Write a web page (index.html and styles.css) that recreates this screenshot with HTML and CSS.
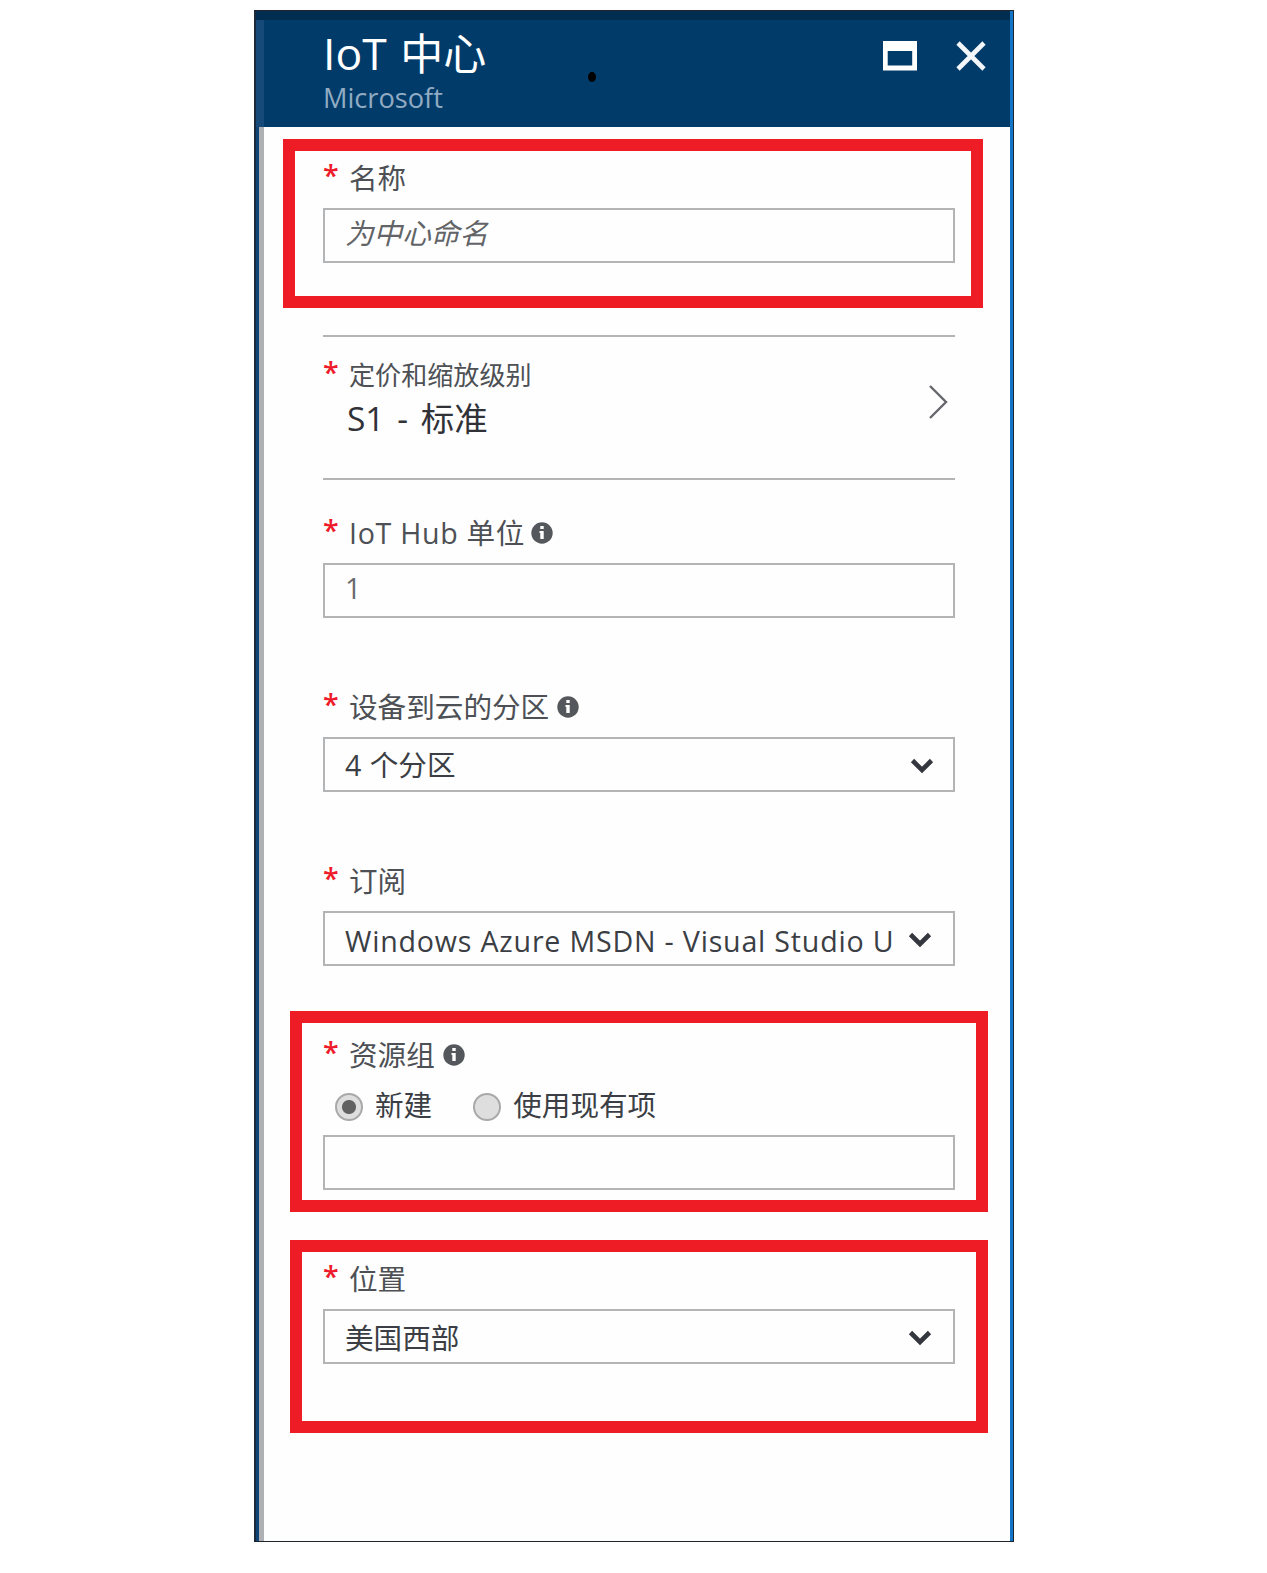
FILE: index.html
```html
<!DOCTYPE html>
<html lang="zh-CN">
<head>
<meta charset="utf-8">
<title>IoT 中心</title>
<link rel="stylesheet" href="styles.css">
</head>
<body>
<main class="blade">
  <header class="header">
    <div class="heading">
      <h1 class="title">IoT <span class="title-cjk">中心</span></h1>
      <p class="subtitle">Microsoft</p>
    </div>
    <span class="dot"></span>
    <div class="actions">
      <svg width="34" height="30" viewBox="0 0 34 30"><path fill="#fff" fill-rule="evenodd" d="M0 0H34V29.500H0ZM4.700 10V24.500H29.200V10Z"/></svg>
      <svg width="30" height="30" viewBox="0 0 30 30"><path d="M2 2 28 28M28 2 2 28" stroke="#f4f7fa" stroke-width="4.600"/></svg>
    </div>
  </header>
  <form class="form">
    <section class="group marked name">
      <div class="label"><span class="star">*</span><span class="text">名称</span></div>
      <div class="field placeholder"><span class="value">为中心命名</span></div>
    </section>
    <section class="pricing">
      <div>
        <div class="label small"><span class="star">*</span><span class="text">定价和缩放级别</span></div>
        <div class="tier">S1 - 标准</div>
      </div>
      <svg class="next" width="20" height="36" viewBox="0 0 20 36"><path d="M1 2 17 18 1 34" fill="none" stroke="#65676c" stroke-width="2.400"/></svg>
    </section>
    <section class="group units">
      <div class="label"><span class="star">*</span><span class="text units-text">IoT Hub 单位</span><svg class="info tight" width="22" height="22" viewBox="0 0 22 22"><circle cx="11" cy="11" r="10.700" fill="#54575b"/><path d="M9.300 4h3.400v3H9.300ZM8.500 9h4.200v8H9.300v-6H8.500Z" fill="#fff"/></svg></div>
      <div class="field muted"><span class="value">1</span></div>
    </section>
    <section class="group plain">
      <div class="label"><span class="star">*</span><span class="text">设备到云的分区</span><svg class="info" width="22" height="22" viewBox="0 0 22 22"><circle cx="11" cy="11" r="10.700" fill="#54575b"/><path d="M9.300 4h3.400v3H9.300ZM8.500 9h4.200v8H9.300v-6H8.500Z" fill="#fff"/></svg></div>
      <div class="field select wide"><span class="value partitions">4 个分区</span><svg width="24" height="18" viewBox="0 0 24 18"><path d="M2.500 3.500 12 13 21.500 3.500" fill="none" stroke="#34373d" stroke-width="4.600"/></svg></div>
    </section>
    <section class="group plain">
      <div class="label"><span class="star">*</span><span class="text">订阅</span></div>
      <div class="field select"><span class="value subscription">Windows Azure MSDN - Visual Studio U</span><svg width="24" height="18" viewBox="0 0 24 18"><path d="M2.500 3.500 12 13 21.500 3.500" fill="none" stroke="#34373d" stroke-width="4.600"/></svg></div>
    </section>
    <section class="group marked resource">
      <div class="label"><span class="star">*</span><span class="text">资源组</span><svg class="info" width="22" height="22" viewBox="0 0 22 22"><circle cx="11" cy="11" r="10.700" fill="#54575b"/><path d="M9.300 4h3.400v3H9.300ZM8.500 9h4.200v8H9.300v-6H8.500Z" fill="#fff"/></svg></div>
      <div class="radios">
        <span class="radio on"></span><span class="option first">新建</span>
        <span class="radio"></span><span class="option">使用现有项</span>
      </div>
      <div class="field"></div>
    </section>
    <section class="group marked location">
      <div class="label"><span class="star">*</span><span class="text">位置</span></div>
      <div class="field select"><span class="value">美国西部</span><svg width="24" height="18" viewBox="0 0 24 18"><path d="M2.500 3.500 12 13 21.500 3.500" fill="none" stroke="#34373d" stroke-width="4.600"/></svg></div>
    </section>
  </form>
</main>
</body>
</html>
```
FILE: styles.css
```css
* { box-sizing: border-box; }

body {
  margin: 0;
  background: #fff;
  font-family: "Open Sans", "Noto Sans CJK SC", sans-serif;
  font-size: 28.6px;
  color: #3b3e44;
}

svg { display: block; flex: none; }

.blade {
  width: 760px;
  height: 1532px;
  margin: 10px 0 0 254px;
  border: 1px solid #20242b;
  border-left: 2px solid #1b2a3a;
  background: linear-gradient(90deg, #0d4475 0 3px, #aeb0b3 3px 8px, #fefefe 8px 754px, #1275c8 754px);
}

.header {
  position: relative;
  display: flex;
  justify-content: space-between;
  height: 116px;
  margin-right: 3px;
  border-top: 9px solid #002d50;
  padding: 21px 24px 0 67px;
  background: linear-gradient(90deg, #154a79 0 8px, #003b6a 8px);
}

.title {
  margin: -14px 0 0;
  font-size: 44.5px;
  font-weight: 400;
  line-height: 52px;
  color: #fff;
  white-space: nowrap;
}

.title-cjk { margin-left: 2px; font-size: 43px; }

.subtitle {
  margin: 2px 0 0;
  font-size: 27.2px;
  line-height: 32px;
  color: #91abc2;
}

.dot {
  position: absolute;
  left: 332px;
  top: 52px;
  width: 8px;
  height: 10px;
  border-radius: 50%;
  background: #000;
}

.actions { display: flex; gap: 39px; }

.form { padding: 12px 0 0 27px; }

.group { width: 632px; margin-left: 40px; }

.marked {
  width: 698px;
  margin-left: 7px;
  border: 12px solid #ee1c25;
  padding: 0 21px;
}

.name {
  width: 700px;
  height: 169px;
  margin-left: 0;
  padding: 9px 16px 0 28px;
}

.label {
  display: flex;
  align-items: center;
  height: 36px;
  margin-bottom: 12px;
  line-height: 36px;
  color: #4d5055;
  white-space: nowrap;
}

.star { width: 26px; padding-bottom: 6px; line-height: 30px; font-weight: 600; color: #ee1c2b; }
.units-text { letter-spacing: 0.7px; }
.info { margin-left: 8px; }
.tight { margin-left: 6px; }

.field {
  display: flex;
  width: 632px;
  height: 55px;
  border: 2px solid #b3b4b5;
  padding-left: 20px;
  line-height: 51px;
  white-space: nowrap;
}

.placeholder { font-style: italic; line-height: 46px; color: #626467; }
.muted { line-height: 46px; color: #686a6e; }

.select {
  justify-content: space-between;
  align-items: center;
  padding-top: 2px;
  padding-right: 21px;
}

.wide { padding-right: 19px; }
.partitions { padding-bottom: 2px; word-spacing: 1px; }
.subscription { padding-top: 1px; letter-spacing: 0.8px; }

.pricing {
  display: flex;
  justify-content: space-between;
  width: 632px;
  height: 145px;
  margin: 27px 0 0 40px;
  border: solid #b3b4b5;
  border-width: 2px 0;
  padding: 20px 6px 0 0;
}

.small { margin-bottom: 4px; font-size: 26.1px; }
.small .star { font-size: 28.6px; }
.tier { padding-left: 24px; font-size: 33.5px; line-height: 42px; word-spacing: 4px; color: #303238; }
.next { margin-top: 27px; }

.units { margin-top: 35px; }
.plain { margin-top: 71px; }

.resource { height: 201px; margin-top: 45px; padding-top: 14px; }
.resource .label { margin-bottom: 0; }

.radios {
  display: flex;
  align-items: center;
  height: 62px;
  padding: 2px 0 0 12px;
  line-height: 36px;
}

.radio {
  width: 28px;
  height: 28px;
  margin: 4px 12px 0 0;
  border: 2px solid #a9a9a9;
  border-radius: 50%;
  background: #dedede;
}

.on { background: radial-gradient(circle, #626262 0 6.5px, #dedede 7.5px); }
.first { margin-right: 41px; }

.location { height: 193px; margin-top: 28px; padding-top: 9px; }
```
